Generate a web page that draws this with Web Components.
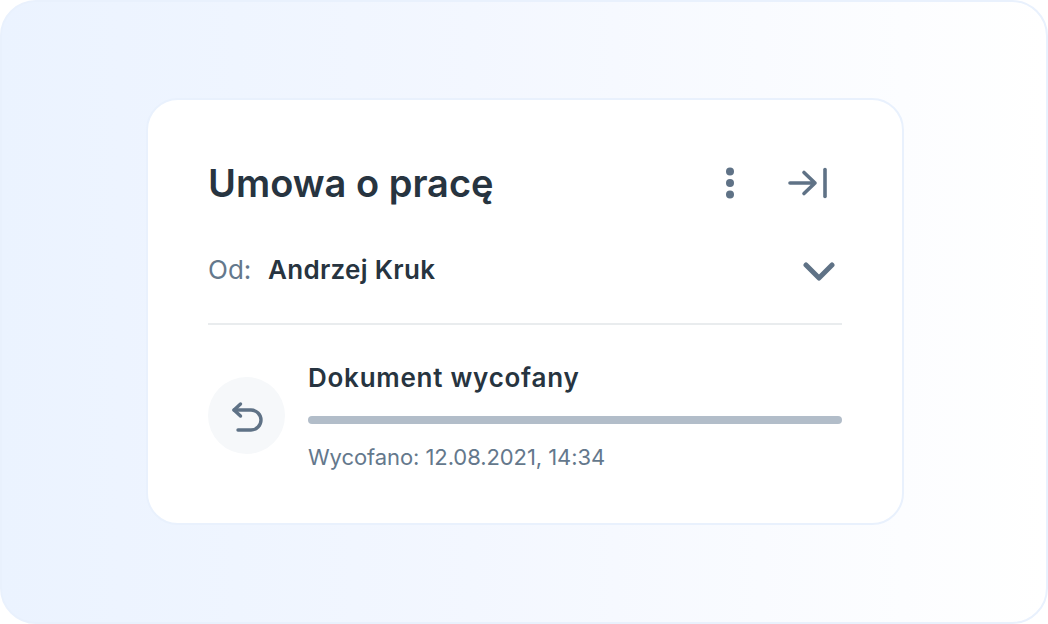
<!DOCTYPE html>
<html lang="pl">
<head>
<meta charset="utf-8">
<title>Umowa o pracę</title>
<style>
  html, body { margin: 0; padding: 0; background: #fff; }
  body { font-family: "Inter", "Noto Sans", sans-serif; }
</style>
</head>
<body>

<doc-stage>
  <doc-card>
    <doc-header title="Umowa o pracę"></doc-header>
    <doc-sender name="Andrzej Kruk"></doc-sender>
    <doc-status title="Dokument wycofany" note="Wycofano: 12.08.2021, 14:34"></doc-status>
  </doc-card>
</doc-stage>

<script>
const stageTemplate = document.createElement("template");
stageTemplate.innerHTML = `
  <style>
    :host {
      display: flex;
      box-sizing: border-box;
      width: 1048px;
      height: 624px;
      padding: 96px 142px 97px 144px;
      border: 2px solid #e9f1fd;
      border-radius: 36px;
      background: linear-gradient(90deg, #ebf3ff 0%, #f3f7ff 45%, #ffffff 100%);
    }
  </style>
  <slot></slot>
`;

const cardTemplate = document.createElement("template");
cardTemplate.innerHTML = `
  <style>
    :host {
      display: flex;
      flex-direction: column;
      box-sizing: border-box;
      width: 100%;
      padding: 55px 60px 0 60px;
      border: 2px solid #e9f1fd;
      border-radius: 32px;
      background: #fff;
    }
  </style>
  <slot></slot>
`;

const headerTemplate = document.createElement("template");
headerTemplate.innerHTML = `
  <style>
    :host { display: flex; align-items: center; height: 56px; color: #273440; }
    h1 {
      flex: 1;
      margin: 0;
      font: 600 38px/56px "Inter", sans-serif;
    }
    svg { display: block; fill: none; stroke: #5f7286; stroke-linecap: round; stroke-linejoin: round; }
    .dots { margin-right: 52px; }
    .end { margin-right: 14px; }
  </style>
  <h1></h1>
  <svg class="dots" width="12" height="32" viewBox="0 0 12 32"><g fill="#5f7286" stroke="none"><circle cx="6" cy="4.500" r="4"/><circle cx="6" cy="16" r="4"/><circle cx="6" cy="27.500" r="4"/></g></svg>
  <svg class="end" width="40" height="32" viewBox="0 0 40 32" stroke-width="3.600"><path d="M2 16H27M16 5.500 27 16 16 26.500"/><path d="M37 2.500V29.500"/></svg>
`;

const senderTemplate = document.createElement("template");
senderTemplate.innerHTML = `
  <style>
    :host {
      display: flex;
      align-items: center;
      box-sizing: border-box;
      height: 114px;
      padding-top: 4px;
      border-bottom: 2px solid #e9ecee;
      font-size: 26px;
    }
    .label { color: #64788c; width: 60px; }
    .name { flex: 1; font-weight: 600; color: #273440; letter-spacing: 0.3px; }
    svg { display: block; margin: 6px 7px 0 0; fill: none; stroke: #5f7286; stroke-width: 5; stroke-linecap: round; stroke-linejoin: round; }
  </style>
  <span class="label">Od:</span>
  <span class="name"></span>
  <svg width="32" height="20" viewBox="0 0 32 20"><path d="M3 3 16 16 29 3"/></svg>
`;

const statusTemplate = document.createElement("template");
statusTemplate.innerHTML = `
  <style>
    :host { display: flex; align-items: flex-start; gap: 23px; padding-top: 38px; }
    .circle {
      flex: none;
      display: flex;
      align-items: center;
      justify-content: center;
      width: 77px;
      height: 77px;
      margin-top: 14px;
      border-radius: 50%;
      background: #f6f8fa;
    }
    svg { display: block; fill: none; stroke: #5f7286; stroke-width: 3.400; stroke-linecap: round; stroke-linejoin: round; }
    .body { flex: 1; min-width: 0; display: flex; flex-direction: column; }
    .title { font-size: 26px; line-height: 30px; font-weight: 600; color: #273440; letter-spacing: 0.75px; }
    .bar { height: 8px; margin: 23px 0 18px; border-radius: 4px; background: #b2bdc9; }
    .note { font-size: 22px; line-height: 30px; color: #64788c; letter-spacing: -0.08px; }
  </style>
  <div class="circle">
    <svg width="32" height="32" viewBox="0 0 32 32"><path d="M9.500 4 3 10 9.500 16"/><path d="M3 10H20a10 10 0 0 1 0 20H7"/></svg>
  </div>
  <div class="body">
    <div class="title"></div>
    <div class="bar"></div>
    <div class="note"></div>
  </div>
`;

class DocStage extends HTMLElement {
  constructor() {
    super();
    this.attachShadow({ mode: "open" });
    this.shadowRoot.appendChild(stageTemplate.content.cloneNode(true));
  }
}

class DocCard extends HTMLElement {
  constructor() {
    super();
    this.attachShadow({ mode: "open" });
    this.shadowRoot.appendChild(cardTemplate.content.cloneNode(true));
  }
}

class DocHeader extends HTMLElement {
  constructor() {
    super();
    this.attachShadow({ mode: "open" });
    this.shadowRoot.appendChild(headerTemplate.content.cloneNode(true));
    this.shadowRoot.querySelector("h1").textContent = this.getAttribute("title");
  }
}

class DocSender extends HTMLElement {
  constructor() {
    super();
    this.attachShadow({ mode: "open" });
    this.shadowRoot.appendChild(senderTemplate.content.cloneNode(true));
    this.shadowRoot.querySelector(".name").textContent = this.getAttribute("name");
  }
}

class DocStatus extends HTMLElement {
  constructor() {
    super();
    this.attachShadow({ mode: "open" });
    this.shadowRoot.appendChild(statusTemplate.content.cloneNode(true));
    this.shadowRoot.querySelector(".title").textContent = this.getAttribute("title");
    this.shadowRoot.querySelector(".note").textContent = this.getAttribute("note");
  }
}

window.customElements.define("doc-stage", DocStage);
window.customElements.define("doc-card", DocCard);
window.customElements.define("doc-header", DocHeader);
window.customElements.define("doc-sender", DocSender);
window.customElements.define("doc-status", DocStatus);
</script>
</body>
</html>
